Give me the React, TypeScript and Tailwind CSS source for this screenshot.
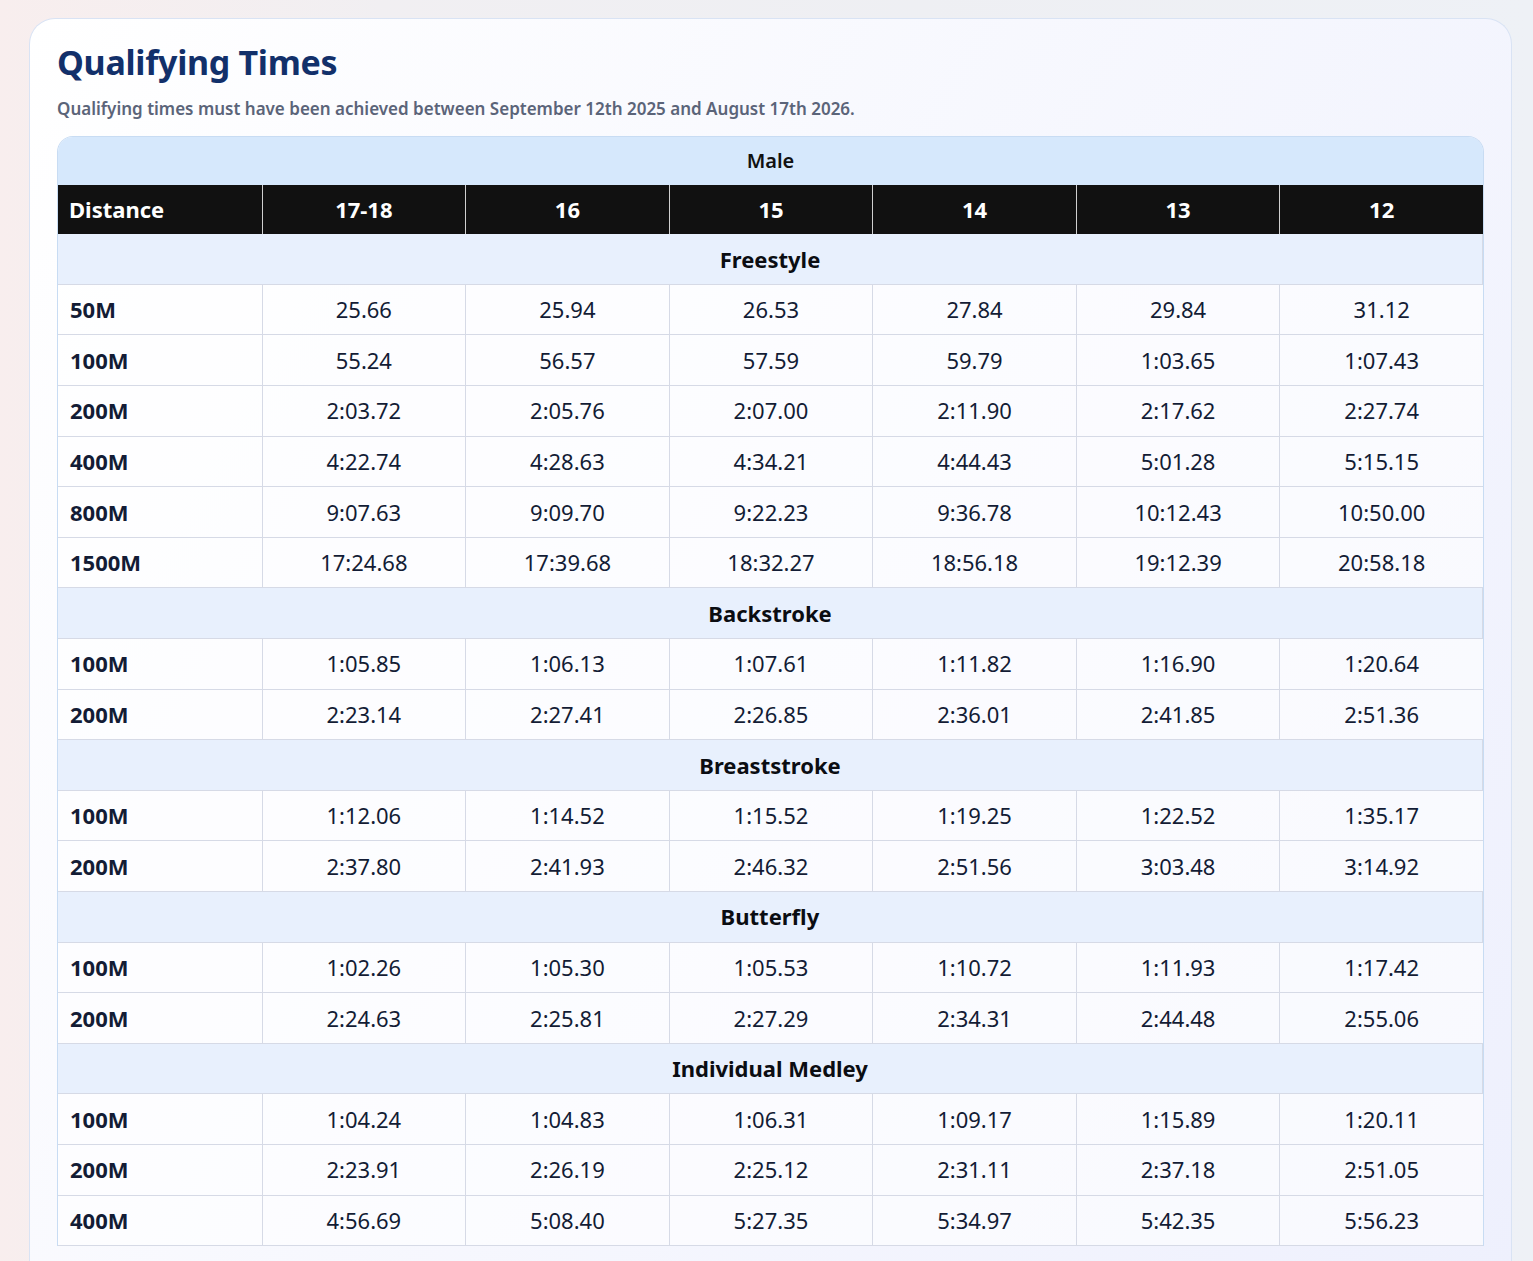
import { Fragment } from "react";

type Stroke = {
	name: string;
	rows: { distance: string; times: string[] }[];
};

const ages = ["17-18", "16", "15", "14", "13", "12"];

const strokes: Stroke[] = [
	{
		name: "Freestyle",
		rows: [
			{ distance: "50M", times: ["25.66", "25.94", "26.53", "27.84", "29.84", "31.12"] },
			{ distance: "100M", times: ["55.24", "56.57", "57.59", "59.79", "1:03.65", "1:07.43"] },
			{ distance: "200M", times: ["2:03.72", "2:05.76", "2:07.00", "2:11.90", "2:17.62", "2:27.74"] },
			{ distance: "400M", times: ["4:22.74", "4:28.63", "4:34.21", "4:44.43", "5:01.28", "5:15.15"] },
			{ distance: "800M", times: ["9:07.63", "9:09.70", "9:22.23", "9:36.78", "10:12.43", "10:50.00"] },
			{ distance: "1500M", times: ["17:24.68", "17:39.68", "18:32.27", "18:56.18", "19:12.39", "20:58.18"] },
		],
	},
	{
		name: "Backstroke",
		rows: [
			{ distance: "100M", times: ["1:05.85", "1:06.13", "1:07.61", "1:11.82", "1:16.90", "1:20.64"] },
			{ distance: "200M", times: ["2:23.14", "2:27.41", "2:26.85", "2:36.01", "2:41.85", "2:51.36"] },
		],
	},
	{
		name: "Breaststroke",
		rows: [
			{ distance: "100M", times: ["1:12.06", "1:14.52", "1:15.52", "1:19.25", "1:22.52", "1:35.17"] },
			{ distance: "200M", times: ["2:37.80", "2:41.93", "2:46.32", "2:51.56", "3:03.48", "3:14.92"] },
		],
	},
	{
		name: "Butterfly",
		rows: [
			{ distance: "100M", times: ["1:02.26", "1:05.30", "1:05.53", "1:10.72", "1:11.93", "1:17.42"] },
			{ distance: "200M", times: ["2:24.63", "2:25.81", "2:27.29", "2:34.31", "2:44.48", "2:55.06"] },
		],
	},
	{
		name: "Individual Medley",
		rows: [
			{ distance: "100M", times: ["1:04.24", "1:04.83", "1:06.31", "1:09.17", "1:15.89", "1:20.11"] },
			{ distance: "200M", times: ["2:23.91", "2:26.19", "2:25.12", "2:31.11", "2:37.18", "2:51.05"] },
			{ distance: "400M", times: ["4:56.69", "5:08.40", "5:27.35", "5:34.97", "5:42.35", "5:56.23"] },
		],
	},
];

export default function App() {
	return (
		<div className="min-h-[1261px] bg-[linear-gradient(90deg,#f8eeee_0%,#f1eff2_25%,#eeeff3_60%,#eef1f6_100%)] pl-[29px] pr-[21px] pt-[18px] font-['Trebuchet_MS','Noto_Sans',sans-serif] text-[#131c35]">
			<div className="rounded-t-[26px] border border-b-0 border-[#d9e3f4] bg-[linear-gradient(120deg,#ffffff_0%,#f7f8fe_45%,#eef0fd_100%)] px-[27px] pb-10 pt-[23px]">
				<h1 className="text-[34px] font-bold leading-[1.2] tracking-[-0.3px] text-[#12306a]">
					Qualifying Times
				</h1>
				<p className="mt-[13px] text-[17px] font-semibold leading-[1.5] text-[#5b6479]">
					Qualifying times must have been achieved between September 12th 2025
					and August 17th 2026.
				</p>

				<div className="mt-[15px] overflow-hidden rounded-t-[16px] border border-b-0 border-[#c8dcf3]">
					<table className="w-full table-fixed border-separate border-spacing-0 text-[22px]">
						<thead>
							<tr>
								<th
									colSpan={7}
									className="h-[48px] bg-[#d6e8fc] text-center text-[20px] font-semibold text-[#111]"
								>
									Male
								</th>
							</tr>
							<tr>
								<th className="h-[49px] bg-[#111] pl-[11px] text-left font-bold text-white">
									Distance
								</th>
								{ages.map((age) => (
									<th
										key={age}
										className="h-[49px] border-l border-[#d0d0d0] bg-[#111] text-center font-bold text-white"
									>
										{age}
									</th>
								))}
							</tr>
						</thead>
						<tbody>
							{strokes.map((stroke) => (
								<Fragment key={stroke.name}>
									<tr>
										<td
											colSpan={7}
											className="h-[50.6px] border-b border-r border-[#d6dae6] bg-[#e8f0fd] text-center font-bold text-[#0b0d12]"
										>
											{stroke.name}
										</td>
									</tr>
									{stroke.rows.map((row) => (
										<tr key={row.distance} className="bg-white/60">
											<td className="h-[50.6px] border-b border-[#d6dae6] pl-[12px] font-bold">
												{row.distance}
											</td>
											{row.times.map((t, i) => (
												<td
													key={ages[i]}
													className="h-[50.6px] border-b border-l border-[#d6dae6] text-center"
												>
													{t}
												</td>
											))}
										</tr>
									))}
								</Fragment>
							))}
						</tbody>
					</table>
				</div>
			</div>
		</div>
	);
}
